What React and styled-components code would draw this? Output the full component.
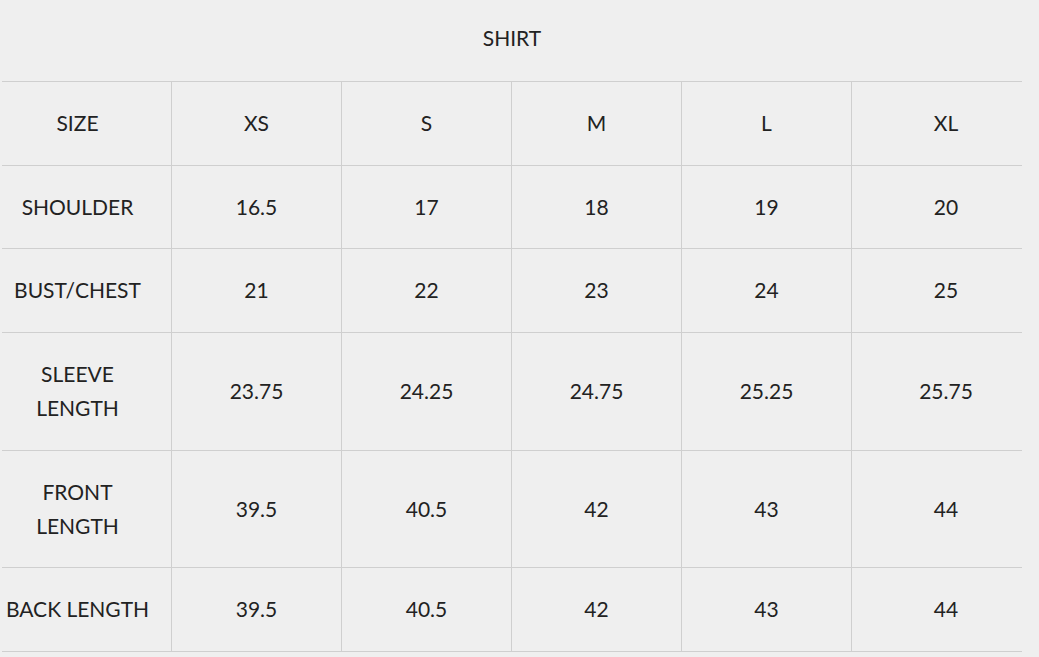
import React from "react";
import styled, { createGlobalStyle } from "styled-components";

const Global = createGlobalStyle`
  html, body { margin: 0; padding: 0; background: #efefef; }
  body { font-family: Lato, "Open Sans", sans-serif; color: #222; }
`;

const Page = styled.div`
  padding: 0 2px;
  width: 1020px;
`;

const Title = styled.h2`
  margin: 0;
  padding: 21px 0 26px;
  text-align: center;
  font-weight: 400;
  font-size: 21px;
  line-height: 34px;
  color: #222;
`;

const Grid = styled.div`
  display: grid;
  grid-template-columns: repeat(6, 170px);
  border-top: 1px solid #cfcfcf;
`;

const Cell = styled.div`
  box-sizing: border-box;
  display: flex;
  align-items: center;
  justify-content: center;
  text-align: center;
  padding: 24px 18px 24.7px;
  font-size: 21px;
  line-height: 34px;
  color: #222;
  border-bottom: 1px solid #cfcfcf;
  border-right: 1px solid #cfcfcf;

  &:nth-child(6n + 1) {
    padding-left: 0;
  }
  &:nth-child(6n) {
    padding-right: 0;
    border-right: none;
  }
`;

const headers = ["SIZE", "XS", "S", "M", "L", "XL"];
const rows = [
  [["SHOULDER"], "16.5", "17", "18", "19", "20"],
  [["BUST/CHEST"], "21", "22", "23", "24", "25"],
  [["SLEEVE", "LENGTH"], "23.75", "24.25", "24.75", "25.25", "25.75"],
  [["FRONT", "LENGTH"], "39.5", "40.5", "42", "43", "44"],
  [["BACK LENGTH"], "39.5", "40.5", "42", "43", "44"],
];

export default function App() {
  return (
    <>
      <Global />
      <Page>
        <Title>SHIRT</Title>
        <Grid>
          {headers.map((h) => (
            <Cell key={h}>{h}</Cell>
          ))}
          {rows.map((r, ri) => (
            <React.Fragment key={ri}>
              <Cell>
                <span>
                  {r[0].map((part, pi) => (
                    <React.Fragment key={pi}>
                      {pi > 0 && <br />}
                      {part}
                    </React.Fragment>
                  ))}
                </span>
              </Cell>
              {r.slice(1).map((v, ci) => (
                <Cell key={ci}>{v}</Cell>
              ))}
            </React.Fragment>
          ))}
        </Grid>
      </Page>
    </>
  );
}
